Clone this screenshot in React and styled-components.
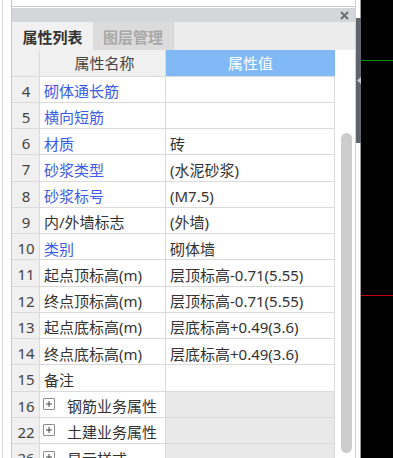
import React from "react";
import styled, { createGlobalStyle } from "styled-components";

const Global = createGlobalStyle`
  html, body { margin: 0; padding: 0; background: #ffffff; }
  body { font-family: "Noto Sans", "Noto Sans CJK SC", sans-serif; }
  * { box-sizing: border-box; }
`;

const Page = styled.div`
  display: flex;
  width: 393px;
  height: 458px;
  overflow: hidden;
  background: #ffffff;
`;

const Gutter = styled.div`
  width: 9px;
  margin-left: 2px;
  border-left: 1px solid #d6d6d6;
  flex: none;
`;

const Dock = styled.div`
  width: 345px;
  flex: none;
  display: flex;
  flex-direction: column;
  border-left: 1px solid #c9c9c9;
  border-right: 1px solid #cfcfcf;
`;

const TopStrip = styled.div`
  height: 7px;
  flex: none;
  border-bottom: 1px solid #c8c8c8;
  margin-bottom: 1px;
  background: #ffffff;
`;

const TitleBar = styled.div`
  height: 14px;
  flex: none;
  background: #d5d6da;
  display: flex;
  align-items: center;
  justify-content: flex-end;
  padding-right: 6px;
`;

const TabBar = styled.div`
  height: 28px;
  flex: none;
  display: flex;
  background: #ececec;
`;

const Tab = styled.div`
  width: 81px;
  display: flex;
  align-items: center;
  justify-content: center;
  font-size: 15px;
  font-weight: 700;
  color: ${(p) => (p.$active ? "#333333" : "#a9a9a9")};
  background: ${(p) => (p.$active ? "#f1f1f1" : "#dcdcdc")};
  border-right: ${(p) => (p.$active ? "none" : "1px solid #d2d2d2")};
`;

const Body = styled.div`
  flex: 1;
  display: flex;
  min-height: 0;
`;

const Table = styled.div`
  width: 323px;
  flex: none;
  display: flex;
  flex-direction: column;
`;

const Row = styled.div`
  display: grid;
  grid-template-columns: 28px 126px 169px;
  height: ${(p) => (p.$head ? "26.5px" : "26.25px")};
  flex: none;
`;

const Cell = styled.div`
  display: flex;
  align-items: center;
  border-right: 1px solid #dadada;
  border-bottom: 1px solid #dadada;
  font-size: 15px;
  white-space: nowrap;
  overflow: hidden;
  padding-top: ${(p) => (p.$head ? "0" : "3px")};
`;

const IndexCell = styled(Cell)`
  justify-content: center;
  background: #f0f0f0;
  color: #444444;
  padding-left: 1px;
`;

const NameCell = styled(Cell)`
  padding-left: 4px;
  background: ${(p) => (p.$head ? "#f0f0f0" : "#ffffff")};
  justify-content: ${(p) => (p.$head ? "center" : "flex-start")};
  color: ${(p) => (p.$blue ? "#3a5ce6" : p.$head ? "#444444" : "#333333")};
`;

const ValueCell = styled(Cell)`
  padding-left: 4px;
  color: #333333;
  background: ${(p) => (p.$gray ? "#e9e9e9" : "#ffffff")};
`;

const HeadValue = styled(Cell)`
  justify-content: center;
  background: #80b9f6;
  color: #ffffff;
  border-right: none;
  border-bottom: 1px solid #dadada;
`;

const PlusBox = styled.span`
  width: 12px;
  height: 12px;
  border: 1px solid #8c8c8c;
  border-radius: 1px;
  background: #ffffff;
  display: inline-flex;
  align-items: center;
  justify-content: center;
  margin-left: -1px;
  margin-right: 12px;
  margin-top: -3px;
  flex: none;
`;

const ScrollTrack = styled.div`
  width: 20px;
  flex: none;
  background: #ffffff;
  padding-top: 83px;
  padding-left: 6px;
`;

const ScrollThumb = styled.div`
  width: 11px;
  height: 320px;
  border-radius: 6px;
  background: #cdcdcd;
`;

const OuterScroll = styled.div`
  width: 5px;
  flex: none;
  background: #ffffff;
  box-shadow: inset -1px 0 0 #9d9d9d;
  padding-top: 18px;
`;

const OuterThumb = styled.div`
  height: 125px;
  background: #5e656d;
  display: flex;
  flex-direction: column;
  align-items: center;
  padding-top: 59px;
`;

const Canvas = styled.div`
  flex: 1;
  background: #000000;
  position: relative;
`;

const Line = styled.div`
  position: absolute;
  left: 0;
  right: 0;
  height: 1px;
  top: ${(p) => p.$top}px;
  background: ${(p) => p.$color};
`;

const rows = [
  { n: 4, name: "砌体通长筋", blue: true, value: "" },
  { n: 5, name: "横向短筋", blue: true, value: "" },
  { n: 6, name: "材质", blue: true, value: "砖" },
  { n: 7, name: "砂浆类型", blue: true, value: "(水泥砂浆)" },
  { n: 8, name: "砂浆标号", blue: true, value: "(M7.5)" },
  { n: 9, name: "内/外墙标志", value: "(外墙)" },
  { n: 10, name: "类别", blue: true, value: "砌体墙" },
  { n: 11, name: "起点顶标高(m)", value: "层顶标高-0.71(5.55)" },
  { n: 12, name: "终点顶标高(m)", value: "层顶标高-0.71(5.55)" },
  { n: 13, name: "起点底标高(m)", value: "层底标高+0.49(3.6)" },
  { n: 14, name: "终点底标高(m)", value: "层底标高+0.49(3.6)" },
  { n: 15, name: "备注", value: "" },
  { n: 16, name: "钢筋业务属性", group: true },
  { n: 22, name: "土建业务属性", group: true },
  { n: 26, name: "显示样式", group: true },
];

const CloseIcon = () => (
  <svg width="9" height="9" viewBox="0 0 9 9">
    <path d="M1 1 L8 8 M8 1 L1 8" stroke="#6f6f6f" strokeWidth="2" />
  </svg>
);

const PlusIcon = () => (
  <svg width="8" height="8" viewBox="0 0 8 8">
    <path d="M4 1 V7 M1 4 H7" stroke="#444" strokeWidth="1" />
  </svg>
);

const ArrowIcon = () => (
  <svg width="4" height="7" viewBox="0 0 4 7">
    <polygon points="4,0 4,7 0,3.5" fill="#c4c7cb" />
  </svg>
);

export default function App() {
  return (
    <>
      <Global />
      <Page>
        <Gutter />
        <Dock>
          <TopStrip />
          <TitleBar>
            <CloseIcon />
          </TitleBar>
          <TabBar>
            <Tab $active>属性列表</Tab>
            <Tab>图层管理</Tab>
          </TabBar>
          <Body>
            <Table>
              <Row $head>
                <IndexCell $head />
                <NameCell $head>属性名称</NameCell>
                <HeadValue $head>属性值</HeadValue>
              </Row>
              {rows.map((r) => (
                <Row key={r.n}>
                  <IndexCell>{r.n}</IndexCell>
                  <NameCell $blue={r.blue}>
                    {r.group && (
                      <PlusBox>
                        <PlusIcon />
                      </PlusBox>
                    )}
                    {r.name}
                  </NameCell>
                  <ValueCell $gray={r.group}>{r.value}</ValueCell>
                </Row>
              ))}
            </Table>
            <ScrollTrack>
              <ScrollThumb />
            </ScrollTrack>
          </Body>
        </Dock>
        <OuterScroll>
          <OuterThumb>
            <ArrowIcon />
          </OuterThumb>
        </OuterScroll>
        <Canvas>
          <Line $top={60} $color="#0b8f0b" />
          <Line $top={295} $color="#c40000" />
        </Canvas>
      </Page>
    </>
  );
}
